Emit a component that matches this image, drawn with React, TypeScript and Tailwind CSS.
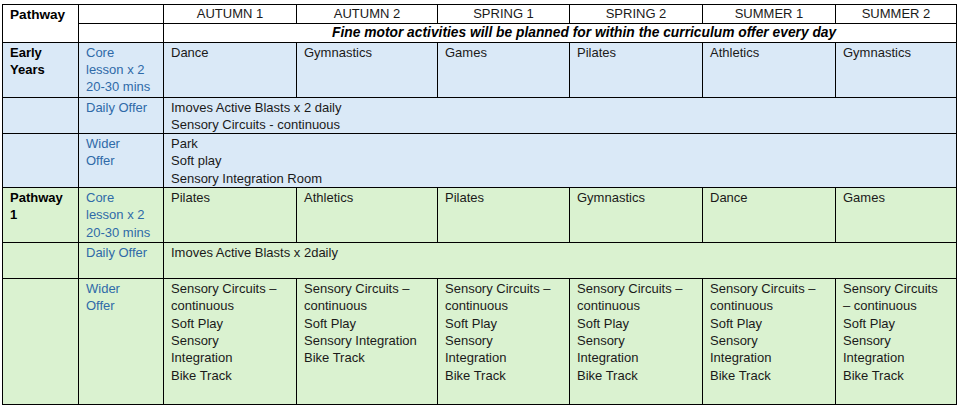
import React from 'react'

const terms = ['AUTUMN 1', 'AUTUMN 2', 'SPRING 1', 'SPRING 2', 'SUMMER 1', 'SUMMER 2']

const widths = ['w-[76px]', 'w-[85px]', 'w-[133px]', 'w-[141px]', 'w-[132px]', 'w-[133px]', 'w-[133px]', 'w-[121px]']

const cell = 'border border-black align-top px-[7px] pt-[0.5px] text-left'

function Lines({ lines }: { lines: string[] }) {
  return (
    <>
      {lines.map((line, i) => (
        <div key={i} className="whitespace-nowrap">{line}</div>
      ))}
    </>
  )
}

const eyCore = ['Dance', 'Gymnastics', 'Games', 'Pilates', 'Athletics', 'Gymnastics']
const p1Core = ['Pilates', 'Athletics', 'Pilates', 'Gymnastics', 'Dance', 'Games']

const p1Wider: string[][] = [
  ['Sensory Circuits –', 'continuous', 'Soft Play', 'Sensory', 'Integration', 'Bike Track'],
  ['Sensory Circuits –', 'continuous', 'Soft Play', 'Sensory Integration', 'Bike Track'],
  ['Sensory Circuits –', 'continuous', 'Soft Play', 'Sensory', 'Integration', 'Bike Track'],
  ['Sensory Circuits –', 'continuous', 'Soft Play', 'Sensory', 'Integration', 'Bike Track'],
  ['Sensory Circuits –', 'continuous', 'Soft Play', 'Sensory', 'Integration', 'Bike Track'],
  ['Sensory Circuits', '– continuous', 'Soft Play', 'Sensory', 'Integration', 'Bike Track'],
]

export default function App() {
  return (
    <div className="bg-white pl-[2px] pt-[4px] text-[13px] leading-[17.4px] text-[#1a1a1a]" style={{ fontFamily: '"Liberation Sans", Arial, sans-serif' }}>
      <table className="table-fixed border-collapse border border-black w-[954px]">
        <colgroup>
          {widths.map((w, i) => (
            <col key={i} className={w} />
          ))}
        </colgroup>
        <tbody>
          <tr className="h-[19px]">
            <td rowSpan={2} className={`${cell} font-bold text-black text-[13.6px]`}>Pathway</td>
            <td className={cell}></td>
            {terms.map(t => (
              <td key={t} className="border border-black text-center align-middle p-0">{t}</td>
            ))}
          </tr>
          <tr className="h-[19px]">
            <td className={cell}></td>
            <td colSpan={6} className="border border-black p-0 pl-[168px] font-bold italic whitespace-nowrap text-black text-[13.8px]">
              Fine motor activities will be planned for within the curriculum offer every day
            </td>
          </tr>

          <tr className="h-[55px] bg-[#dae9f7]">
            <td className={`${cell} font-bold text-black`}>Early<br />Years</td>
            <td className={`${cell} text-[#2f6aa8]`}>Core<br />lesson x 2<br />20-30 mins</td>
            {eyCore.map((c, i) => (
              <td key={i} className={cell}>{c}</td>
            ))}
          </tr>
          <tr className="h-[36px] bg-[#dae9f7]">
            <td className={cell}></td>
            <td className={`${cell} text-[#2f6aa8]`}>Daily Offer</td>
            <td colSpan={6} className={cell}>
              <Lines lines={['Imoves Active Blasts x 2 daily', 'Sensory Circuits - continuous']} />
            </td>
          </tr>
          <tr className="h-[54px] bg-[#dae9f7]">
            <td className={cell}></td>
            <td className={`${cell} text-[#2f6aa8]`}>Wider<br />Offer</td>
            <td colSpan={6} className={cell}>
              <Lines lines={['Park', 'Soft play', 'Sensory Integration Room']} />
            </td>
          </tr>

          <tr className="h-[55px] bg-[#daf2d0]">
            <td className={`${cell} font-bold text-black`}>Pathway<br />1</td>
            <td className={`${cell} text-[#2f6aa8]`}>Core<br />lesson x 2<br />20-30 mins</td>
            {p1Core.map((c, i) => (
              <td key={i} className={cell}>{c}</td>
            ))}
          </tr>
          <tr className="h-[36px] bg-[#daf2d0]">
            <td className={cell}></td>
            <td className={`${cell} text-[#2f6aa8]`}>Daily Offer</td>
            <td colSpan={6} className={cell}>Imoves Active Blasts x 2daily</td>
          </tr>
          <tr className="h-[126px] bg-[#daf2d0]">
            <td className={cell}></td>
            <td className={`${cell} text-[#2f6aa8]`}>Wider<br />Offer</td>
            {p1Wider.map((lines, i) => (
              <td key={i} className={cell}>
                <Lines lines={lines} />
              </td>
            ))}
          </tr>
        </tbody>
      </table>
    </div>
  )
}
